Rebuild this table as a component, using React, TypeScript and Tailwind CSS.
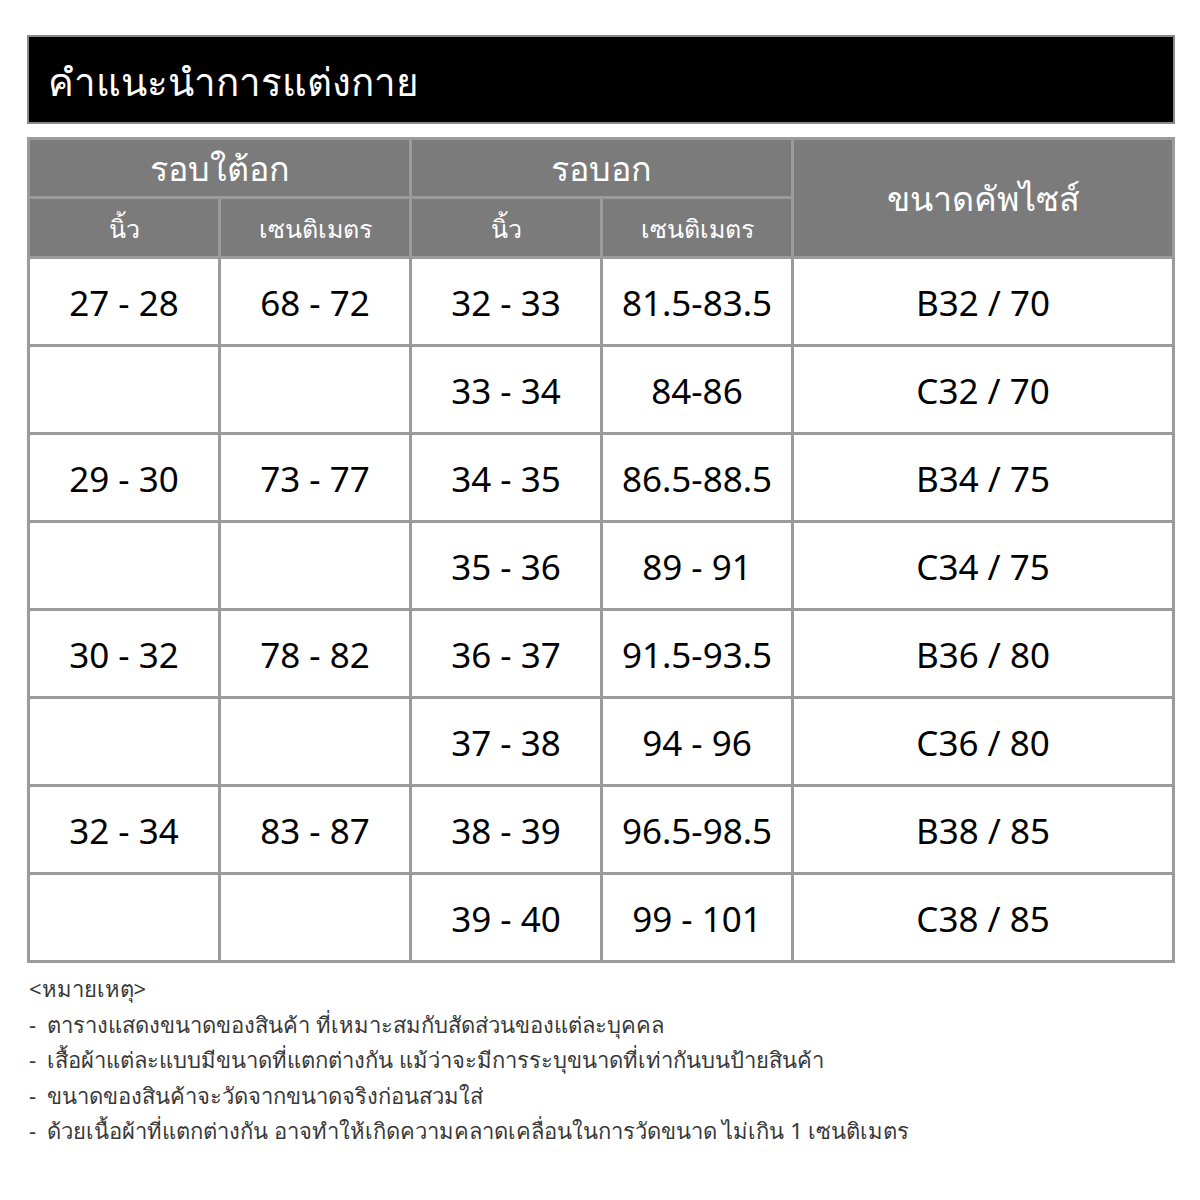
const rows = [
  ["27 - 28", "68 - 72", "32 - 33", "81.5-83.5", "B32 / 70"],
  ["", "", "33 - 34", "84-86", "C32 / 70"],
  ["29 - 30", "73 - 77", "34 - 35", "86.5-88.5", "B34 / 75"],
  ["", "", "35 - 36", "89 - 91", "C34 / 75"],
  ["30 - 32", "78 - 82", "36 - 37", "91.5-93.5", "B36 / 80"],
  ["", "", "37 - 38", "94 - 96", "C36 / 80"],
  ["32 - 34", "83 - 87", "38 - 39", "96.5-98.5", "B38 / 85"],
  ["", "", "39 - 40", "99 - 101", "C38 / 85"],
];

const notes = [
  "ตารางแสดงขนาดของสินค้า ที่เหมาะสมกับสัดส่วนของแต่ละบุคคล",
  "เสื้อผ้าแต่ละแบบมีขนาดที่แตกต่างกัน แม้ว่าจะมีการระบุขนาดที่เท่ากันบนป้ายสินค้า",
  "ขนาดของสินค้าจะวัดจากขนาดจริงก่อนสวมใส่",
  "ด้วยเนื้อผ้าที่แตกต่างกัน อาจทำให้เกิดความคลาดเคลื่อนในการวัดขนาด ไม่เกิน 1 เซนติเมตร",
];

const head = "flex items-center justify-center bg-[#7b7b7b] text-white";

export default function App() {
  return (
    <div className="h-[1200px] w-[1200px] bg-white pt-[35px] pl-[27px] font-['Noto_Sans','Open_Sans',sans-serif]">
      <div className="flex h-[89px] w-[1148px] items-center border-2 border-[#8a8a8a] bg-black pt-[4px] pl-[19px]">
        <h1 className="text-[38.5px] leading-none text-white">คำแนะนำการแต่งกาย</h1>
      </div>

      <div className="mt-[13px] grid w-[1148px] grid-cols-[188px_188px_188px_188px_1fr] grid-rows-[56px_57px_repeat(8,85px)] gap-[3px] bg-[#9b9b9b] p-[3px]">
        <div className={`${head} col-span-2 text-[34px]`}>รอบใต้อก</div>
        <div className={`${head} col-span-2 text-[34px]`}>รอบอก</div>
        <div className={`${head} row-span-2 text-[34px]`}>ขนาดคัพไซส์</div>
        <div className={`${head} pt-[3px] text-[25px]`}>นิ้ว</div>
        <div className={`${head} pt-[3px] text-[25px]`}>เซนติเมตร</div>
        <div className={`${head} pt-[3px] text-[25px]`}>นิ้ว</div>
        <div className={`${head} pt-[3px] text-[25px]`}>เซนติเมตร</div>
        {rows.map((r, i) =>
          r.map((c, j) => (
            <div
              key={`${i}-${j}`}
              className="flex items-center justify-center bg-white pt-[4px] text-[35px] text-black"
            >
              {c}
            </div>
          ))
        )}
      </div>

      <div className="mt-[8px] pl-[2px] text-[22px] leading-[35.5px] text-[#383838]">
        <p>&lt;หมายเหตุ&gt;</p>
        {notes.map((n) => (
          <p key={n}>
            <span className="inline-block w-[18px]">-</span>
            {n}
          </p>
        ))}
      </div>
    </div>
  );
}
